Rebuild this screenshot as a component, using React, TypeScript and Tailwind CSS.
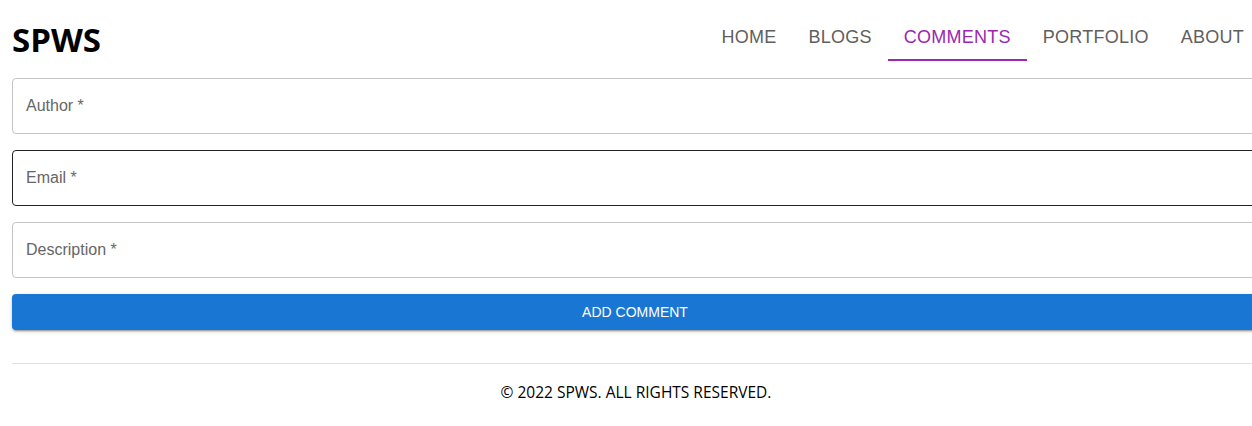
import { useState } from 'react'

const tabs = ['HOME', 'BLOGS', 'COMMENTS', 'PORTFOLIO', 'ABOUT']

function Field({ label, active }: { label: string; active?: boolean }) {
  return (
    <div
      className={`h-14 rounded border flex items-center px-[13px] ${
        active ? 'border-[#212121]' : 'border-[#c4c4c4]'
      }`}
    >
      <span className="text-[16px] text-[#666666]">{label}</span>
    </div>
  )
}

export default function App() {
  const [tab] = useState('COMMENTS')

  return (
    <div className="w-full overflow-hidden bg-white font-['Liberation_Sans',Arial,sans-serif]">
      <div className="w-[1272px] px-3">
        <header className="flex items-end justify-between h-[61px]">
          <h1 className="font-['Open_Sans',sans-serif] font-bold text-[33px] leading-none text-black self-center mt-[18px]">
            SPWS
          </h1>
          <nav className="flex">
            {tabs.map((t) => (
              <a
                key={t}
                className={`h-12 px-4 pt-[3px] flex items-center text-[18px] tracking-[0.25px] border-b-2 ${
                  t === tab ? 'text-[#9c27b0] border-[#9c27b0]' : 'text-[#5f5f5f] border-transparent'
                }`}
              >
                {t}
              </a>
            ))}
          </nav>
        </header>

        <form className="mt-[17px] w-[1246px] flex flex-col gap-4">
          <Field label="Author *" />
          <Field label="Email *" active />
          <Field label="Description *" />
          <button
            type="button"
            className="h-9 rounded bg-[#1976d2] text-white text-[14px] shadow-[0_3px_1px_-2px_rgba(0,0,0,0.2),0_2px_2px_0_rgba(0,0,0,0.14),0_1px_5px_0_rgba(0,0,0,0.12)]"
          >
            ADD COMMENT
          </button>
        </form>

        <footer className="w-[1248px] mt-[33px] border-t border-[#e0e0e0] pt-[17px] text-center">
          <p className="font-['Open_Sans',sans-serif] text-[15.5px] text-black">
            © 2022 SPWS. ALL RIGHTS RESERVED.
          </p>
        </footer>
      </div>
    </div>
  )
}
